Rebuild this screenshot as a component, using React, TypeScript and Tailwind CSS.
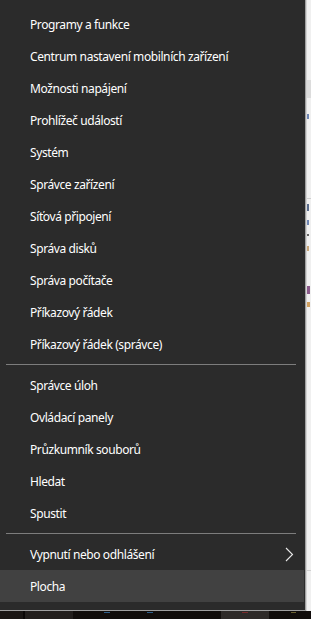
import React from 'react';

const GROUPS: string[][] = [
  [
    'Programy a funkce',
    'Centrum nastavení mobilních zařízení',
    'Možnosti napájení',
    'Prohlížeč událostí',
    'Systém',
    'Správce zařízení',
    'Síťová připojení',
    'Správa disků',
    'Správa počítače',
    'Příkazový řádek',
    'Příkazový řádek (správce)',
  ],
  ['Správce úloh', 'Ovládací panely', 'Průzkumník souborů', 'Hledat', 'Spustit'],
];

const Row: React.FC<{ label: string; active?: boolean; arrow?: boolean }> = ({ label, active, arrow }) => (
  <div
    className={`h-8 flex items-center justify-between pl-[30px] pr-[9px] mr-px ${
      active ? 'bg-[#414141]' : ''
    }`}
  >
    <span className="text-[12px] tracking-[-0.4px] text-white leading-none pt-[2px]">{label}</span>
    {arrow && (
      <svg width="9" height="15" viewBox="0 0 9 15" className="mr-px">
        <path d="M1 1 L7.5 7.5 L1 14" fill="none" stroke="#e8e8e8" strokeWidth="1.1" />
      </svg>
    )}
  </div>
);

const Separator: React.FC = () => <div className="h-px bg-[#7d7d7d] ml-[6px] mr-[9px] my-1" />;

export default function App() {
  return (
    <div
      className="w-[311px] h-[619px] flex flex-col bg-[#110d0b] overflow-hidden"
      style={{ fontFamily: '"Noto Sans", "Open Sans", sans-serif' }}
    >
      <div className="flex h-[611px]">
        {/* Win+X menu */}
        <div className="w-[306px] bg-[#2b2b2b] border-r border-b border-[#a0a0a0] pt-2 pb-2 flex flex-col">
          {GROUPS[0].map(l => (
            <Row key={l} label={l} />
          ))}
          <Separator />
          {GROUPS[1].map(l => (
            <Row key={l} label={l} />
          ))}
          <Separator />
          <Row label="Vypnutí nebo odhlášení" arrow />
          <Row label="Plocha" active />
        </div>

        {/* window behind */}
        <div className="flex-1 bg-[#f0f0f0] flex flex-col border-l border-[#d4d4d4]">
          <div className="h-[80px]" />
          <div className="h-[18px] bg-[#dcdcdc]" />
          <div className="h-[16px]" />
          <div className="h-[5px] w-[2px] bg-[#6f86b3]" />
          <div className="h-[79px]" />
          <div className="h-px bg-[#cfcfcf]" />
          <div className="h-[5px]" />
          <div className="h-[7px] w-[2px] bg-[#5a6c8c]" />
          <div className="h-[9px]" />
          <div className="h-[5px] w-[2px] bg-[#6f86b3]" />
          <div className="h-[9px]" />
          <div className="h-[2px] w-[2px] bg-[#666]" />
          <div className="h-[10px]" />
          <div className="h-[5px] w-[2px] bg-[#c9a77a]" />
          <div className="h-[35px]" />
          <div className="h-[8px] w-[3px] bg-[#8a5a8a]" />
          <div className="h-[8px]" />
          <div className="h-[5px] w-[3px] bg-[#d0a060]" />
          <div className="flex-1" />
          <div className="h-px bg-[#d0d0d0] mb-[40px]" />
        </div>
      </div>

      {/* taskbar */}
      <div className="flex-1 flex">
        <div className="w-[23px] bg-[#1a1614]" />
        <div className="w-[2px] bg-[#0a0706]" />
        <div className="w-[48px] bg-[#221e1c]" />
        <div className="w-[31px]" />
        <div className="w-[6px] h-px bg-[#2f5f8a] mt-px" />
        <div className="w-[37px]" />
        <div className="w-[6px] h-px bg-[#2f5f8a] mt-px" />
        <div className="w-[68px]" />
        <div className="w-[48px] bg-[#2e2a28] flex justify-center">
          <div className="w-[6px] h-px bg-[#7a2a2a] mt-px" />
        </div>
        <div className="w-[22px]" />
        <div className="w-[5px] h-px bg-[#6a6030] mt-px" />
      </div>
    </div>
  );
}
